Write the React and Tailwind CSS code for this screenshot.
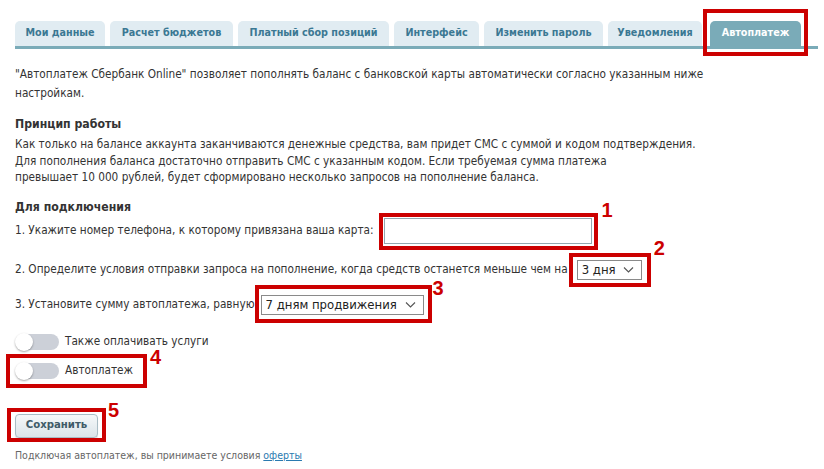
import React from "react";

const font = {
  fontFamily: '"DejaVu Sans Condensed", "Liberation Sans", sans-serif',
};

const tabs = [
  { label: "Мои данные", w: "w-[90px]" },
  { label: "Расчет бюджетов", w: "w-[123px]" },
  { label: "Платный сбор позиций", w: "w-[151px]" },
  { label: "Интерфейс", w: "w-[85px]" },
  { label: "Изменить пароль", w: "w-[119px]" },
  { label: "Уведомления", w: "w-[94px]" },
];

function Num({ children, className }) {
  return (
    <span
      className={`absolute text-[20px] leading-none font-bold text-[#cc0000] ${className}`}
      style={{ fontFamily: '"Liberation Sans", sans-serif' }}
    >
      {children}
    </span>
  );
}

function Box({ className }) {
  return (
    <span
      className={`absolute border-[4px] border-[#cc0000] pointer-events-none ${className}`}
    />
  );
}

function Chevron() {
  return (
    <svg
      className="absolute right-[8px] top-1/2 -translate-y-1/2 pointer-events-none"
      width="11"
      height="7"
      viewBox="0 0 11 7"
      fill="none"
    >
      <path d="M1 1l4.5 4.5L10 1" stroke="#555" strokeWidth="1.1" />
    </svg>
  );
}

function Toggle() {
  return (
    <span className="relative inline-block w-[44px] h-[18px] shrink-0">
      <span className="absolute left-[2px] right-0 top-[1px] bottom-[1px] rounded-full bg-[#ccd0d8]" />
      <span className="absolute left-0 top-0 w-[18px] h-[18px] rounded-full bg-white shadow-[0_1px_2px_rgba(0,0,0,0.35)]" />
    </span>
  );
}

export default function App() {
  return (
    <div className="w-[824px] h-[469px] bg-white overflow-hidden" style={font}>
      {/* Tabs */}
      <div className="pt-[21px] pl-[15px] pr-[6px]">
        <div className="flex items-end gap-[5px] border-b-[3px] border-[#7aabb8]">
          {tabs.map((t) => (
            <div
              key={t.label}
              className={`${t.w} h-[25px] flex items-center justify-center rounded-t-[5px] bg-[#e1ecf2] text-[#3b7893] text-[10.7px] font-bold`}
            >
              {t.label}
            </div>
          ))}
          <div className="relative ml-[3px] w-[91px] h-[25px] flex items-center justify-center rounded-t-[5px] bg-[#7aabb8] text-white text-[10.7px] font-bold">
            Автоплатеж
            <Box className="-left-[7px] -right-[7px] -top-[12px] -bottom-[10px]" />
          </div>
        </div>
      </div>

      {/* Content */}
      <div className="px-[15px] text-[11.7px] text-[#333]">
        <p className="mt-[16px] leading-[19px]">
          "Автоплатеж Сбербанк Online" позволяет пополнять баланс с банковской карты автоматически согласно указанным ниже
          <br />
          настройкам.
        </p>

        <h3 className="mt-[12px] text-[12.2px] leading-[18px] font-bold">Принцип работы</h3>
        <p className="mt-[3px] leading-[16.5px]">
          Как только на балансе аккаунта заканчиваются денежные средства, вам придет СМС с суммой и кодом подтверждения.
          <br />
          Для пополнения баланса достаточно отправить СМС с указанным кодом. Если требуемая сумма платежа
          <br />
          превышает 10 000 рублей, будет сформировано несколько запросов на пополнение баланса.
        </p>

        <h3 className="mt-[12px] text-[12.2px] leading-[18px] font-bold">Для подключения</h3>

        <div className="mt-[2px] flex items-center">
          <span>1. Укажите номер телефона, к которому привязана ваша карта:</span>
          <span className="relative ml-[10px] inline-block">
            <input
              type="text"
              className="block w-[208px] h-[26px] border border-[#93a7b0] bg-white outline-none px-[4px]"
            />
            <Box className="-left-[5px] -right-[6px] -top-[5px] -bottom-[6px]" />
            <Num className="left-[calc(100%+10px)] -top-[18px]">1</Num>
          </span>
        </div>

        <div className="mt-[16px] flex items-center">
          <span>2. Определите условия отправки запроса на пополнение, когда средств останется меньше чем на</span>
          <span className="relative ml-[9px] inline-block">
            <select className="block appearance-none w-[65px] h-[20px] border border-[#8a8a8a] bg-white text-[13px] text-[#222] pl-[4px] leading-[18px] outline-none">
              <option>3 дня</option>
            </select>
            <Chevron />
            <Box className="-left-[8px] -right-[9px] -top-[7px] -bottom-[7px]" />
            <Num className="left-[calc(100%+12px)] -top-[22px]">2</Num>
          </span>
        </div>

        <div className="mt-[15px] flex items-center">
          <span>3. Установите сумму автоплатежа, равную</span>
          <span className="relative ml-[6px] inline-block">
            <select className="block appearance-none w-[163px] h-[20px] border border-[#8a8a8a] bg-white text-[13px] text-[#222] pl-[4px] leading-[18px] outline-none">
              <option>7 дням продвижения</option>
            </select>
            <Chevron />
            <Box className="-left-[6px] -right-[8px] -top-[10px] -bottom-[8px]" />
            <Num className="left-[calc(100%+9px)] -top-[17px]">3</Num>
          </span>
        </div>

        <div className="mt-[18px] flex items-center gap-[6px]">
          <Toggle />
          <span>Также оплачивать услуги</span>
        </div>

        <div className="mt-[11px] flex">
          <span className="relative inline-flex items-center gap-[6px]">
            <Toggle />
            <span>Автоплатеж</span>
            <Box className="-left-[9px] -right-[14px] -top-[8px] -bottom-[8px]" />
            <Num className="left-[calc(100%+17px)] -top-[15px]">4</Num>
          </span>
        </div>

        <div className="mt-[34px] flex">
          <span className="relative inline-block">
            <button className="block w-[83px] h-[24px] rounded-[4px] border border-[#a9bcc4] bg-gradient-to-b from-[#f5f8f9] to-[#dbe4e9] text-[11.3px] font-bold text-[#3f5b68] shadow-[0_1px_1px_rgba(0,0,0,0.15)]">
              Сохранить
            </button>
            <Box className="-left-[8px] -right-[8px] -top-[6px] -bottom-[4px]" />
            <Num className="left-[calc(100%+10px)] -top-[14px]">5</Num>
          </span>
        </div>

        <p className="mt-[10px] text-[10.5px] leading-[14px] text-[#666]">
          Подключая автоплатеж, вы принимаете условия{" "}
          <a href="#" className="text-[#2a7ab0] underline">
            оферты
          </a>
        </p>
      </div>
    </div>
  );
}
